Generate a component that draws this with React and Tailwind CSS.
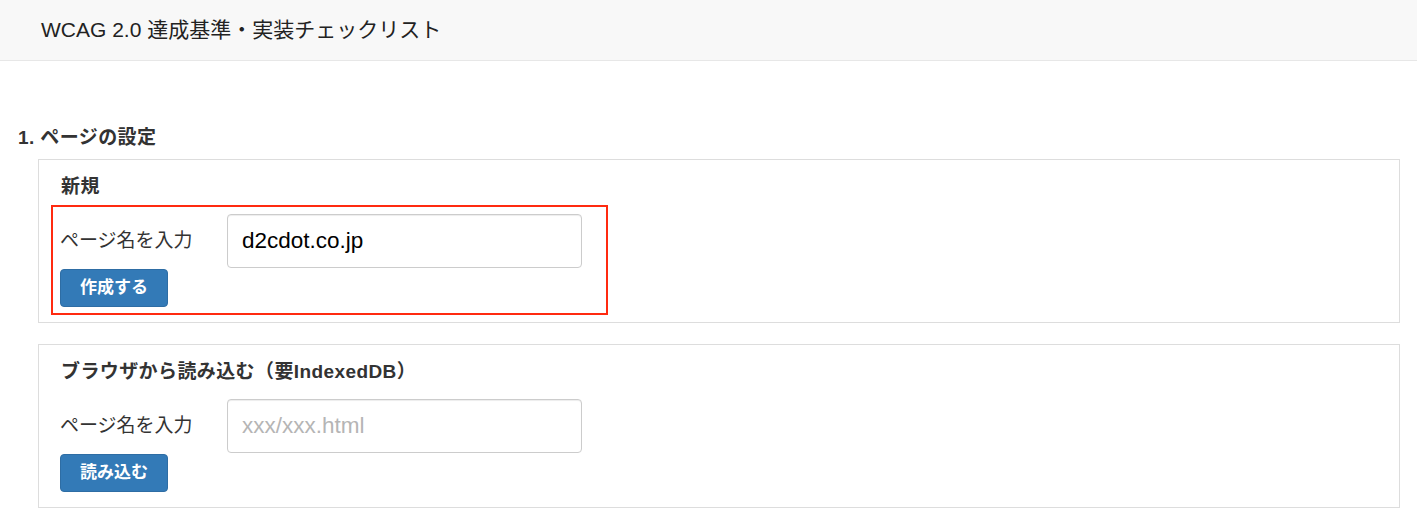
import React from "react";

const font = { fontFamily: '"Liberation Sans", "Noto Sans CJK JP", sans-serif' };

function FormGroup({ value, placeholder, button, highlight }) {
  return (
    <div
      className={
        "w-[557px] border-2 pt-[7px] pb-[6px] pl-[7px] " +
        (highlight ? "border-[#ff2a10]" : "border-transparent")
      }
    >
      <div className="flex items-center">
        <label className="w-[167px] text-[19px] text-[#333]">ページ名を入力</label>
        <input
          type="text"
          defaultValue={value}
          placeholder={placeholder}
          className="w-[355px] h-[54px] border border-[#ccc] rounded-[4px] px-[14px] text-[22.5px] text-black placeholder:text-[#b5b5b5] shadow-[inset_0_1px_1px_rgba(0,0,0,0.075)] outline-none"
        />
      </div>
      <button className="mt-[1px] w-[108px] h-[38px] bg-[#337ab7] border border-[#2e6da4] rounded-[4px] text-white text-[17px] font-bold">
        {button}
      </button>
    </div>
  );
}

function Panel({ title, children, className }) {
  return (
    <div className={"ml-[20px] border border-[#ddd] pt-[14px] pb-[7px] px-[12px] " + (className || "")}>
      <h3 className="pl-[10px] mb-[5px] text-[19px] leading-[26px] tracking-[0.4px] font-bold text-[#333]">{title}</h3>
      {children}
    </div>
  );
}

export default function App() {
  return (
    <div style={font} className="min-h-screen bg-white">
      <header className="h-[61px] bg-[#f8f8f8] border-b border-[#e7e7e7] flex items-center px-[41px]">
        <span className="text-[21px] text-[#222]">WCAG 2.0 達成基準・実装チェックリスト</span>
      </header>
      <main className="pl-[18px] pr-[17px] pt-[64px]">
        <h2 className="text-[19px] leading-[26px] tracking-[0.4px] font-bold text-[#333] mb-[8px]">1. ページの設定</h2>
        <Panel title="新規">
          <FormGroup value="d2cdot.co.jp" button="作成する" highlight />
        </Panel>
        <Panel title="ブラウザから読み込む（要IndexedDB）" className="mt-[21px]">
          <FormGroup placeholder="xxx/xxx.html" button="読み込む" />
        </Panel>
      </main>
    </div>
  );
}
